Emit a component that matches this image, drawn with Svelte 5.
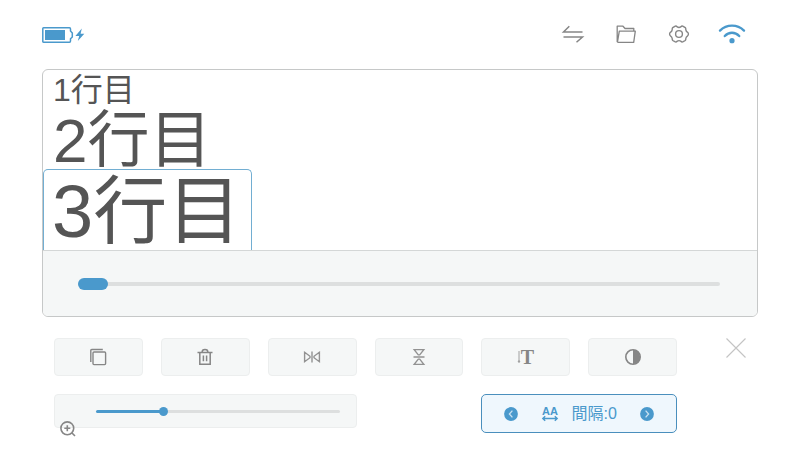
<script>
  let position = $state(0);
  let zoom = $state(27);
  let spacing = $state(0);

  const thumb = 9;
  let fill = $derived(`calc(${thumb / 2}px + (100% - ${thumb}px) * ${zoom / 100})`);
</script>

<main class="editor">
  <header class="topbar">
    <svg class="battery" width="44" height="20" viewBox="0 -1 44 20" role="img" aria-label="バッテリー充電中">
      <path d="M1.5 2.7H27.5Q28.5 2.7 28.5 4V6L30.3 8V12L28.5 13.8V16Q28.5 17.2 27.5 17.2H1.5Q.8 17.2.8 16.4V3.5Q.8 2.7 1.5 2.7Z" fill="none" stroke="#4a99cc" stroke-width="1.5" />
      <rect x="3" y="5" width="20" height="10" fill="#4a99cc" />
      <path d="M39.8 3.5L33.4 11H37.2L35.8 16L42.3 8.7H38.6Z" fill="#4a99cc" />
    </svg>
    <nav class="tools" aria-label="メニュー">
      <button class="icon" aria-label="切り替え">
        <svg width="28" height="24" viewBox="0 0 28 24">
          <path d="M23.5 10H4.5L10.3 4.2M4.5 15H23.5L17.5 20.3" fill="none" stroke="#868686" stroke-width="1.5" />
        </svg>
      </button>
      <button class="icon" aria-label="フォルダー">
        <svg width="28" height="24" viewBox="0 0 28 24">
          <path d="M5.2 20V4.2H11L13 6.5H21.8V9M5.4 20.4L7.3 9.2H23.3L21.7 20.4H5.4" fill="none" stroke="#868686" stroke-width="1.3" stroke-linejoin="round" />
        </svg>
      </button>
      <button class="icon" aria-label="設定">
        <svg width="28" height="24" viewBox="0 0 28 24">
          <path d="M9.8 4.3Q11.2 3.6 12.2 4.9Q14 6 15.8 4.9Q16.8 3.6 18.2 4.3L20.2 5.6Q20.9 6.3 20.8 7.6Q21 9.4 22.6 10.3Q23.4 11 23.4 12T22.6 13.8Q21 14.8 20.8 16.5Q20.9 17.8 20.2 18.5L18.2 19.7Q16.8 20.4 15.8 19.2Q14 18 12.2 19.2Q11.2 20.4 9.8 19.7L7.8 18.5Q7.1 17.8 7.2 16.5Q7 14.8 5.4 13.8Q4.6 13 4.6 12T5.4 10.3Q7 9.4 7.2 7.6Q7.1 6.3 7.8 5.6Z" fill="none" stroke="#868686" stroke-width="1.4" />
          <circle cx="14" cy="12" r="3.4" fill="none" stroke="#868686" stroke-width="1.4" />
        </svg>
      </button>
      <button class="icon" aria-label="Wi-Fi">
        <svg width="28" height="24" viewBox="0 0 28 24">
          <path d="M2 8.6Q7 3.6 14 3.6T26 8.6M6.8 14Q9.8 10.8 14 10.8T21.2 14" fill="none" stroke="#4a99cc" stroke-width="2.4" stroke-linecap="round" />
          <circle cx="14" cy="18.7" r="2.6" fill="#4a99cc" />
        </svg>
      </button>
    </nav>
  </header>

  <section class="panel">
    <div class="lines">
      <div class="line first">1行目</div>
      <div class="line second">2行目</div>
      <div class="line third">3行目</div>
    </div>
    <div class="scroll">
      <input class="range wide" type="range" min="0" max="100" bind:value={position} aria-label="表示位置" />
    </div>
  </section>

  <section class="controls">
    <div class="grid">
      <button class="tile" aria-label="コピー">
        <svg width="20" height="20" viewBox="0 0 20 20" fill="none" stroke="#868686" stroke-width="1.4">
          <rect x="5" y="5" width="12.6" height="12.6" rx="1" />
          <path d="M2.8 15V3.5Q2.8 2.5 3.8 2.5H14.8" />
        </svg>
      </button>
      <button class="tile" aria-label="削除">
        <svg width="20" height="20" viewBox="0 0 20 20" fill="none" stroke="#868686" stroke-width="1.5">
          <path d="M2.5 5.6H17.5M4.8 5.6V17.3H15.2V5.6M7.1 5.3Q7.1 2.6 10 2.6T12.9 5.3M8.4 8.6V14.2M11.6 8.6V14.2" />
        </svg>
      </button>
      <button class="tile" aria-label="左右反転">
        <svg width="20" height="20" viewBox="0 0 20 20" fill="none" stroke="#929292" stroke-width="1.4">
          <path d="M10 4.5V15.5M2.6 5.3L8 9.3V10.7L2.6 14.7ZM17.4 5.3L12 9.3V10.7L17.4 14.7Z" />
        </svg>
      </button>
      <button class="tile" aria-label="上下反転">
        <svg width="20" height="20" viewBox="0 0 20 20" fill="none" stroke="#929292" stroke-width="1.4">
          <path d="M4.5 10H15.5M5.2 2.6H14.8L10.7 7.9H9.3ZM5.2 17.4H14.8L10.7 12.1H9.3Z" />
        </svg>
      </button>
      <button class="tile" aria-label="文字の高さ">
        <svg width="20" height="20" viewBox="0 0 20 20">
          <path d="M3 4V14.5M2 14L3 15.6L4 14Z" fill="#a0a0a0" stroke="#a0a0a0" stroke-width="1" />
          <text class="serif" x="11.5" y="16.5" text-anchor="middle">T</text>
        </svg>
      </button>
      <button class="tile" aria-label="白黒反転">
        <svg width="20" height="20" viewBox="0 0 20 20">
          <circle cx="10" cy="10" r="7.2" fill="none" stroke="#868686" stroke-width="1.6" />
          <path d="M10 2.8A7.2 7.2 0 0 1 10 17.2Z" fill="#868686" />
        </svg>
      </button>

      <div class="zoom">
        <input class="range small" type="range" min="0" max="100" bind:value={zoom} style:--fill={fill} aria-label="拡大率" />
        <svg class="magnifier" width="18" height="18" viewBox="0 0 18 18" fill="none" stroke="#868686" stroke-width="1.6">
          <circle cx="8.3" cy="8.3" r="6.4" />
          <path d="M13 13L16 16M5.3 8.3H11.3M8.3 5.3V11.3" />
        </svg>
      </div>

      <div class="spacing">
        <button class="icon" aria-label="間隔を狭く" onclick={() => (spacing -= 1)}>
          <svg width="14" height="14" viewBox="0 0 14 14">
            <circle cx="7" cy="7" r="6.9" fill="#4a99cc" />
            <path d="M8.4 3.6L5.4 7L8.4 10.4" fill="none" stroke="#c9e1f1" stroke-width="1.3" />
          </svg>
        </button>
        <span class="value">
          <svg width="18" height="16" viewBox="0 0 18 16">
            <text class="aa" x="9" y="9" text-anchor="middle">AA</text>
            <path d="M2 12.5H16M4.2 10.2L1.8 12.5L4.2 14.8M13.8 10.2L16.2 12.5L13.8 14.8" fill="none" stroke="#4a99cc" stroke-width="1.4" />
          </svg>
          <output>間隔:{spacing}</output>
        </span>
        <button class="icon" aria-label="間隔を広く" onclick={() => (spacing += 1)}>
          <svg width="14" height="14" viewBox="0 0 14 14">
            <circle cx="7" cy="7" r="6.9" fill="#4a99cc" />
            <path d="M5.6 3.6L8.6 7L5.6 10.4" fill="none" stroke="#c9e1f1" stroke-width="1.3" />
          </svg>
        </button>
      </div>
    </div>
    <button class="icon" aria-label="閉じる">
      <svg width="20" height="20" viewBox="0 0 20 20">
        <path d="M.5.5L19.5 19.5M19.5.5L.5 19.5" stroke="#c4c4c4" stroke-width="1.1" />
      </svg>
    </button>
  </section>
</main>

<style>
  :global(body) {
    background: #fff;
  }

  .editor {
    box-sizing: border-box;
    padding: 0 42px 16px;
    font-family: "Liberation Sans", "Noto Sans CJK JP", sans-serif;
    color: #555;
  }

  svg {
    display: block;
  }

  button {
    margin: 0;
    padding: 0;
    border: 0;
    background: none;
    font: inherit;
    cursor: pointer;
  }

  .topbar {
    display: flex;
    align-items: center;
    justify-content: space-between;
    box-sizing: border-box;
    height: 69px;
    padding-bottom: 1px;
  }

  .tools {
    display: flex;
    gap: 25px;
    padding-right: 12px;
  }

  .panel {
    border: 1px solid #c6c8c8;
    border-radius: 6px;
    overflow: hidden;
  }

  .lines {
    padding-top: 2px;
  }

  .line {
    padding-left: 10px;
    white-space: nowrap;
  }

  .first {
    font-size: 32px;
    line-height: 36px;
  }

  .second {
    margin-top: 4px;
    font-size: 62px;
    line-height: 57px;
  }

  .third {
    width: fit-content;
    padding: 6px 10px 2px 8px;
    border: 1px solid #72aed2;
    border-bottom: 0;
    border-radius: 5px 5px 0 0;
    font-size: 74px;
    line-height: 72px;
  }

  .scroll {
    display: flex;
    align-items: center;
    height: 65px;
    padding: 0 37px 0 35px;
    border-top: 1px solid #d4d7d7;
    background: #f5f7f7;
  }

  .range {
    appearance: none;
    width: 100%;
    height: 12px;
    margin: 0;
    background: none;
  }

  .range::-webkit-slider-runnable-track {
    height: 4px;
    border-radius: 2px;
    background: #dddfdf;
  }

  .range::-webkit-slider-thumb {
    appearance: none;
    background: #4a99cc;
  }

  .wide::-webkit-slider-thumb {
    width: 30px;
    height: 12px;
    margin-top: -4px;
    border-radius: 6px;
  }

  .small::-webkit-slider-runnable-track {
    height: 3px;
    background: linear-gradient(to right, #4a99cc var(--fill), #dddfdf var(--fill));
  }

  .small::-webkit-slider-thumb {
    width: 9px;
    height: 9px;
    margin-top: -3px;
    border-radius: 50%;
  }

  .controls {
    display: flex;
    align-items: flex-start;
    justify-content: space-between;
    padding: 21px 12px 0;
  }

  .grid {
    display: grid;
    flex: 1;
    grid-template-columns: repeat(6, 1fr);
    gap: 18px;
    margin-right: 49px;
  }

  .tile,
  .zoom {
    border: 1px solid #eceeee;
    border-radius: 4px;
    background: #f5f7f7;
  }

  .tile {
    display: flex;
    align-items: center;
    justify-content: center;
    height: 38px;
  }

  .zoom {
    position: relative;
    display: flex;
    grid-column: span 3;
    align-items: center;
    box-sizing: border-box;
    height: 34px;
    padding: 0 16px 0 41px;
  }

  .magnifier {
    position: absolute;
    top: 25px;
    left: 4px;
  }

  .spacing {
    display: flex;
    grid-column: 5 / span 2;
    align-items: center;
    justify-content: space-between;
    box-sizing: border-box;
    height: 39px;
    padding: 0 22px;
    border: 1px solid #4a8fbd;
    border-radius: 5px;
    background: #eff7fd;
    color: #4a99cc;
  }

  .value {
    display: flex;
    align-items: center;
    gap: 12px;
    font-size: 16px;
    line-height: 20px;
  }

  .serif {
    fill: #868686;
    font: bold 20px "Liberation Serif", serif;
  }

  .aa {
    fill: #4a99cc;
    font: bold 11px "Liberation Sans", sans-serif;
  }
</style>
